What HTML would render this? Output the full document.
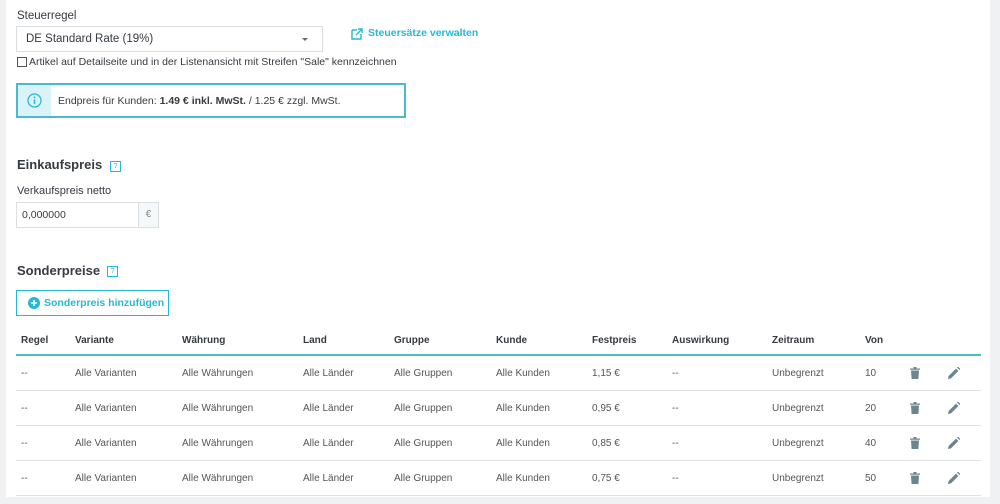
<!DOCTYPE html>
<html><head><meta charset="utf-8"><style>
*{margin:0;padding:0;box-sizing:border-box}
body{width:1000px;height:504px;background:#eff1f2;font-family:"Liberation Sans",sans-serif;color:#363a41;position:relative;overflow:hidden}
.card{position:absolute;left:6px;top:0;width:984px;height:497px;background:#fff}
.a{position:absolute;white-space:nowrap}
.t{font-size:10px;color:#555}
.h{font-size:10px;font-weight:bold;color:#363a41}
.sep{position:absolute;left:16px;width:965px;height:1px;background:#dde2e5}
</style></head><body>
<div class="card"></div>
<div class="a" style="left:17px;top:10px;font-size:11.5px">Steuerregel</div>
<div class="a" style="left:16px;top:26px;width:307px;height:26px;border:1px solid #dcdfe2;font-size:11.5px;padding:6px 9px">DE Standard Rate (19%)</div>
<div class="a" style="left:302px;top:38px;width:0;height:0;border-left:3px solid transparent;border-right:3px solid transparent;border-top:3px solid #666"></div>
<svg class="a" style="left:351px;top:28px" width="12" height="12" viewBox="0 0 12 12"><path d="M1 2h5M1 2v9h9V6M7 1h4v4M11 1L5 7" stroke="#25b9d7" stroke-width="1.4" fill="none"/></svg>
<div class="a" style="left:368px;top:27px;font-size:10.5px;color:#25b9d7;font-weight:bold">Steuersätze verwalten</div>
<div class="a" style="left:17px;top:57px;width:10px;height:10px;border:1px solid #555"></div>
<div class="a" style="left:29px;top:56px;font-size:10.5px">Artikel auf Detailseite und in der Listenansicht mit Streifen "Sale" kennzeichnen</div>
<div class="a" style="left:16px;top:83px;width:390px;height:35px;border:2px solid #4cbbc9;background:#fff"></div>
<div class="a" style="left:18px;top:85px;width:33px;height:31px;background:#d9f3f8"></div>
<svg class="a" style="left:27px;top:93px" width="15" height="15" viewBox="0 0 15 15"><circle cx="7.5" cy="7.5" r="6.5" stroke="#25b9d7" stroke-width="1.3" fill="none"/><path d="M7.5 6.5v4.5" stroke="#25b9d7" stroke-width="1.5"/><circle cx="7.5" cy="4.3" r=".9" fill="#25b9d7"/></svg>
<div class="a" style="left:58px;top:95px;font-size:10.5px">Endpreis für Kunden: <b>1.49 € inkl. MwSt.</b> / 1.25 € zzgl. MwSt.</div>
<div class="a" style="left:17px;top:157px;font-size:13px;font-weight:bold">Einkaufspreis</div>
<div class="a" style="left:110px;top:161px;width:11px;height:11px;border:1px solid #25b9d7;font-size:7px;color:#25b9d7;text-align:center;line-height:9px">?</div>
<div class="a" style="left:17px;top:185px;font-size:11px">Verkaufspreis netto</div>
<div class="a" style="left:16px;top:202px;width:143px;height:26px;border:1px solid #dcdfe2"></div>
<div class="a" style="left:138px;top:203px;width:20px;height:24px;background:#f5f8f9;border-left:1px solid #dcdfe2;font-size:10px;color:#888;text-align:center;line-height:24px">€</div>
<div class="a" style="left:22px;top:209px;font-size:10.5px">0,000000</div>
<div class="a" style="left:17px;top:263px;font-size:13px;font-weight:bold">Sonderpreise</div>
<div class="a" style="left:107px;top:266px;width:11px;height:11px;border:1px solid #25b9d7;font-size:7px;color:#25b9d7;text-align:center;line-height:9px">?</div>
<div class="a" style="left:16px;top:290px;width:153px;height:26px;border:1px solid #25b9d7"></div>
<svg class="a" style="left:28px;top:297px" width="12" height="12" viewBox="0 0 12 12"><circle cx="6" cy="6" r="6" fill="#25b9d7"/><path d="M6 3v6M3 6h6" stroke="#fff" stroke-width="1.6"/></svg>
<div class="a" style="left:44px;top:297px;font-size:10.5px;color:#25b9d7;font-weight:bold">Sonderpreis hinzufügen</div>
<div class="a h" style="left:21px;top:335px">Regel</div>
<div class="a h" style="left:75px;top:335px">Variante</div>
<div class="a h" style="left:182px;top:335px">Währung</div>
<div class="a h" style="left:303px;top:335px">Land</div>
<div class="a h" style="left:394px;top:335px">Gruppe</div>
<div class="a h" style="left:496px;top:335px">Kunde</div>
<div class="a h" style="left:592px;top:335px">Festpreis</div>
<div class="a h" style="left:672px;top:335px">Auswirkung</div>
<div class="a h" style="left:772px;top:335px">Zeitraum</div>
<div class="a h" style="left:865px;top:335px">Von</div>
<div class="sep" style="top:354px;height:2px;background:#4cbbc9"></div>
<div id="rows"></div>
<script>
var p=["1,15 €","0,95 €","0,85 €","0,75 €"],v=["10","20","40","50"],h="";
for(var i=0;i<4;i++){var y=368+i*35;
h+='<div class="a t" style="left:21px;top:'+y+'px">--</div><div class="a t" style="left:75px;top:'+y+'px">Alle Varianten</div><div class="a t" style="left:182px;top:'+y+'px">Alle Währungen</div><div class="a t" style="left:303px;top:'+y+'px">Alle Länder</div><div class="a t" style="left:394px;top:'+y+'px">Alle Gruppen</div><div class="a t" style="left:496px;top:'+y+'px">Alle Kunden</div><div class="a t" style="left:592px;top:'+y+'px">'+p[i]+'</div><div class="a t" style="left:672px;top:'+y+'px">--</div><div class="a t" style="left:772px;top:'+y+'px">Unbegrenzt</div><div class="a t" style="left:865px;top:'+y+'px">'+v[i]+'</div>'+
'<svg class="a" style="left:910px;top:'+(y-1)+'px" width="10" height="12" viewBox="0 0 10 12"><path d="M0 1.5h10v1.3H0zM3.5 0h3v1.5h-3zM1 3.5h8l-.6 8.5H1.6z" fill="#6c868e"/></svg>'+
'<svg class="a" style="left:948px;top:'+(y-1)+'px" width="12" height="12" viewBox="0 0 12 12"><path d="M0 12l.6-3L8 1.6l2.4 2.4L3 11.4zM9 .6l1-1 2.4 2.4-1 1z" fill="#6c868e"/></svg>'+
'<div class="sep" style="top:'+(y+22)+'px"></div>';}
document.getElementById("rows").innerHTML=h;
</script>
</body></html>
